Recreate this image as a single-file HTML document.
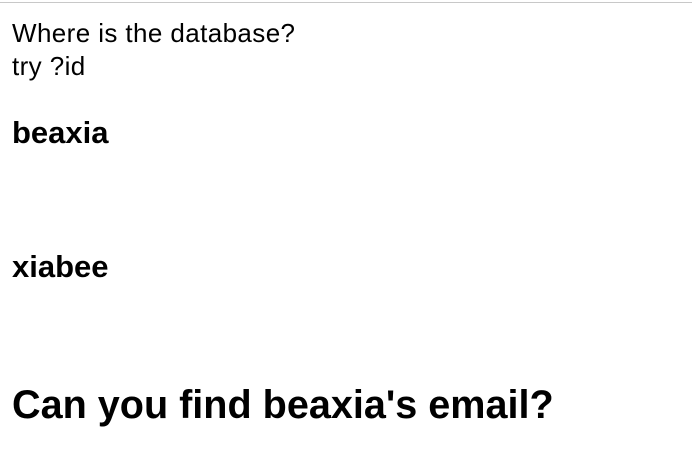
<!DOCTYPE html>
<html><head><style>
html,body{margin:0;padding:0;background:#fff;width:692px;height:468px;overflow:hidden;}
.l{position:absolute;left:12px;color:#000;font-family:"Liberation Sans",sans-serif;white-space:nowrap;line-height:1;}
.top{position:absolute;left:0;top:2px;width:692px;height:1px;background:#c8c8c8;}
</style></head><body>
<div class="top"></div>
<div class="l" style="top:20px;font-size:26px;letter-spacing:0.4px">Where is the database?</div>
<div class="l" style="top:53px;font-size:26px;letter-spacing:0.4px">try ?id</div>
<div class="l" style="top:117px;font-size:31px;font-weight:bold">beaxia</div>
<div class="l" style="top:251px;font-size:31px;font-weight:bold">xiabee</div>
<div class="l" style="top:386px;font-size:39.6px;font-weight:bold">Can you find beaxia's email?</div>
</body></html>
